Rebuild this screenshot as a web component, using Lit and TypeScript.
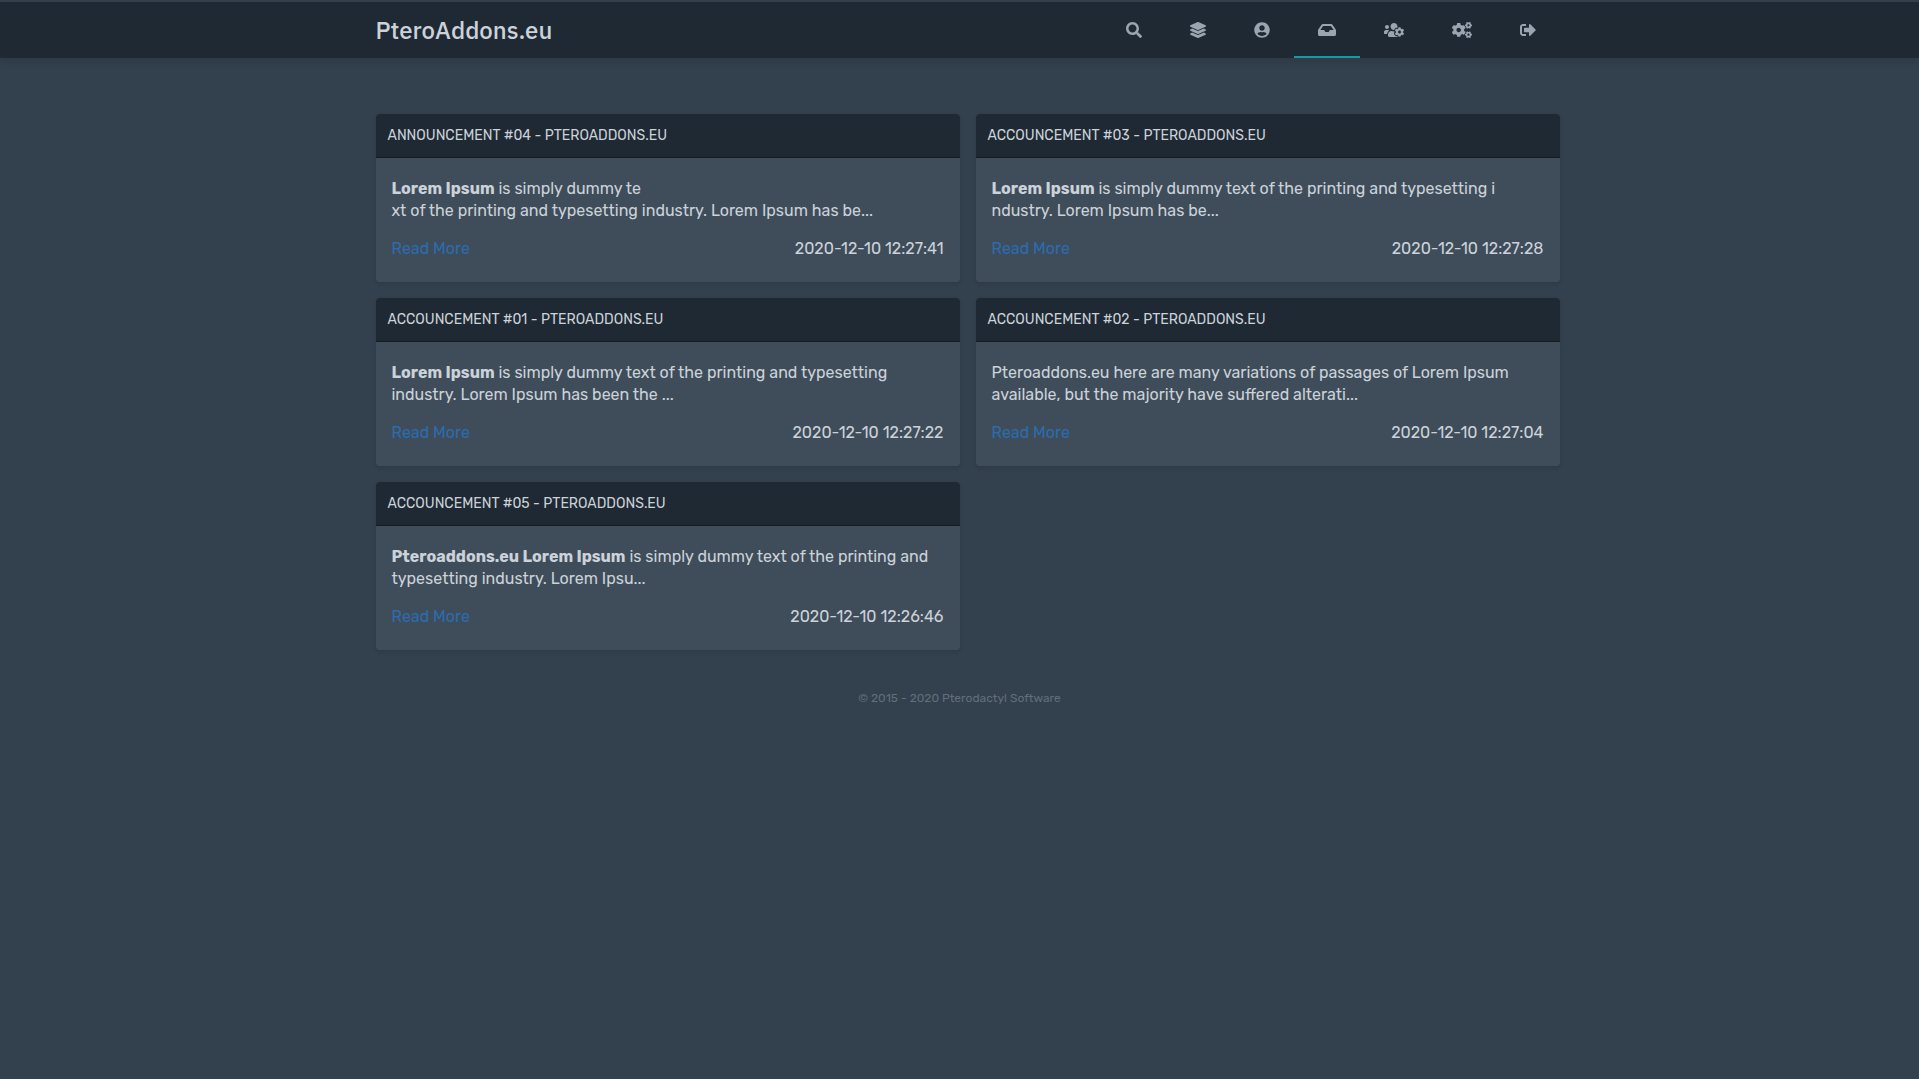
import { LitElement, html, css, svg } from "lit";
import { customElement, property } from "lit/decorators.js";

const smallCog =
  "M512.1 191l-8.2 14.3c-3 5.3-9.4 7.5-15.1 5.4-11.8-4.4-22.6-10.7-32.1-18.6-4.6-3.8-5.8-10.5-2.8-15.7l8.2-14.3c-6.9-8-12.3-17.3-15.9-27.4h-16.5c-6 0-11.2-4.3-12.2-10.3-2-12-2.1-24.6 0-37.1 1-6 6.2-10.4 12.2-10.4h16.5c3.6-10.1 9-19.4 15.9-27.4l-8.2-14.3c-3-5.2-1.9-11.9 2.8-15.7 9.5-7.9 20.4-14.2 32.1-18.6 5.7-2.1 12.1.1 15.1 5.4l8.2 14.3c10.5-1.9 21.2-1.9 31.7 0L552 6.3c3-5.3 9.4-7.5 15.1-5.4 11.8 4.4 22.6 10.7 32.1 18.6 4.6 3.8 5.8 10.5 2.8 15.7l-8.2 14.3c6.9 8 12.3 17.3 15.9 27.4h16.5c6 0 11.2 4.3 12.2 10.3 2 12 2.1 24.6 0 37.1-1 6-6.2 10.4-12.2 10.4h-16.5c-3.6 10.1-9 19.4-15.9 27.4l8.2 14.3c3 5.2 1.9 11.9-2.8 15.7-9.5 7.9-20.4 14.2-32.1 18.6-5.7 2.1-12.1-.1-15.1-5.4l-8.2-14.3c-10.4 1.9-21.2 1.9-31.7 0zm-10.5-58.8c38.5 29.6 82.4-14.3 52.8-52.8-38.5-29.7-82.4 14.3-52.8 52.8z";

interface NavItem {
  label: string;
  width: number;
  active?: boolean;
  shape: unknown;
}

const navItems: NavItem[] = [
  {
    label: "Search",
    width: 512,
    shape: svg`<path d="M505 442.7L405.3 343c-4.5-4.5-10.6-7-17-7H372c27.6-35.3 44-79.7 44-128C416 93.1 322.9 0 208 0S0 93.1 0 208s93.1 208 208 208c48.3 0 92.7-16.4 128-44v16.3c0 6.4 2.5 12.5 7 17l99.7 99.7c9.4 9.4 24.6 9.4 33.9 0l28.3-28.3c9.4-9.4 9.4-24.6.1-34zM208 336c-70.7 0-128-57.2-128-128 0-70.7 57.2-128 128-128 70.7 0 128 57.2 128 128 0 70.7-57.2 128-128 128z"/>`,
  },
  {
    label: "Servers",
    width: 512,
    shape: svg`<path d="M12.41 148.02l232.94 105.67c6.8 3.09 14.49 3.09 21.29 0l232.94-105.67c16.55-7.51 16.55-32.52 0-40.03L266.65 2.31a25.607 25.607 0 0 0-21.29 0L12.41 107.98c-16.55 7.51-16.55 32.53 0 40.04zm487.18 88.28l-58.09-26.33-161.64 73.27c-7.56 3.43-15.59 5.17-23.86 5.17s-16.29-1.74-23.86-5.17L70.51 209.97l-58.1 26.33c-16.55 7.5-16.55 32.5 0 40l232.94 105.59c6.8 3.08 14.49 3.08 21.29 0L499.59 276.3c16.55-7.5 16.55-32.5 0-40zm0 127.8l-57.87-26.23-161.86 73.37c-7.56 3.43-15.59 5.17-23.86 5.17s-16.29-1.74-23.86-5.17L70.29 337.87 12.41 364.1c-16.55 7.5-16.55 32.5 0 40l232.94 105.59c6.8 3.08 14.49 3.08 21.29 0L499.59 404.1c16.55-7.5 16.55-32.5 0-40z"/>`,
  },
  {
    label: "Account",
    width: 512,
    shape: svg`<path transform="translate(8 0)" d="M248 8C111 8 0 119 0 256s111 248 248 248 248-111 248-248S385 8 248 8zm0 96c48.6 0 88 39.4 88 88s-39.4 88-88 88-88-39.4-88-88 39.4-88 88-88zm0 344c-58.7 0-111.3-26.6-146.5-68.2 18.8-35.4 55.6-59.8 98.5-59.8 2.4 0 4.8.4 7.1 1.1 13 4.2 26.6 6.9 40.9 6.9 14.3 0 28-2.7 40.9-6.9 2.3-.7 4.7-1.1 7.1-1.1 42.9 0 79.7 24.4 98.5 59.8C359.3 421.4 306.7 448 248 448z"/>`,
  },
  {
    label: "Announcements",
    width: 576,
    active: true,
    shape: svg`<path d="M567.938 243.908L462.25 85.374A48.003 48.003 0 0 0 422.311 64H153.689a48 48 0 0 0-39.938 21.374L8.062 243.908A47.994 47.994 0 0 0 0 270.533V400c0 26.51 21.49 48 48 48h480c26.51 0 48-21.49 48-48V270.533a47.994 47.994 0 0 0-8.062-26.625zM162.252 128h251.497l85.333 128H376l-32 64H232l-32-64H76.918l85.334-128z"/>`,
  },
  {
    label: "Staff",
    width: 640,
    shape: svg`<path d="M610.5 341.3c2.6-14.1 2.6-28.5 0-42.6l25.8-14.9c3-1.7 4.3-5.2 3.3-8.5-6.7-21.6-18.2-41.2-33.2-57.4-2.3-2.5-6-3.1-9-1.4l-25.8 14.9c-10.9-9.3-23.4-16.5-36.9-21.3v-29.8c0-3.4-2.4-6.4-5.7-7.1-22.3-5-45-4.8-66.2 0-3.3.7-5.7 3.7-5.7 7.1v29.8c-13.5 4.8-26 12-36.9 21.3l-25.8-14.9c-2.9-1.7-6.7-1.1-9 1.4-15 16.2-26.5 35.8-33.2 57.4-1 3.3.4 6.8 3.3 8.5l25.8 14.9c-2.6 14.1-2.6 28.5 0 42.6l-25.8 14.9c-3 1.7-4.3 5.2-3.3 8.5 6.7 21.6 18.2 41.1 33.2 57.4 2.3 2.5 6 3.1 9 1.4l25.8-14.9c10.9 9.3 23.4 16.5 36.9 21.3v29.8c0 3.4 2.4 6.4 5.7 7.1 22.3 5 45 4.8 66.2 0 3.3-.7 5.7-3.7 5.7-7.1v-29.8c13.5-4.8 26-12 36.9-21.3l25.8 14.9c2.9 1.7 6.7 1.1 9-1.4 15-16.2 26.5-35.8 33.2-57.4 1-3.3-.4-6.8-3.3-8.5l-25.8-14.9zM496 368.5c-26.8 0-48.5-21.8-48.5-48.5s21.8-48.5 48.5-48.5 48.5 21.8 48.5 48.5-21.7 48.5-48.5 48.5zM96 224c35.3 0 64-28.7 64-64s-28.7-64-64-64-64 28.7-64 64 28.7 64 64 64zm224 32c1.9 0 3.7-.5 5.6-.6 8.3-21.7 20.5-42.1 36.3-59.2 7.4-8 17.9-12.6 28.9-12.6 6.9 0 13.7 1.8 19.6 5.3l7.9 4.6c.8-.5 1.6-.9 2.4-1.4 7-14.6 11.2-30.8 11.2-48 0-61.9-50.1-112-112-112S208 82.1 208 144c0 61.9 50.1 112 112 112zm105.2 194.5c-2.3-1.2-4.6-2.6-6.8-3.9-8.2 4.8-15.3 9.8-27.5 9.8-10.9 0-21.4-4.6-28.9-12.6-18.3-19.8-32.3-43.9-40.2-69.6-10.7-34.5 24.9-49.7 25.8-50.3-.1-2.6-.1-5.2 0-7.8l-7.9-4.6c-3.8-2.2-7-5-9.8-8.1-3.3.2-6.5.6-9.8.6-24.6 0-47.6-6-68.5-16h-8.3C179.6 288 128 339.6 128 403.2V432c0 26.5 21.5 48 48 48h255.4c-3.7-6-6.2-12.8-6.2-20.3v-9.2zM173.1 274.6C161.5 263.1 145.6 256 128 256H64c-35.3 0-64 28.7-64 64v32c0 17.7 14.3 32 32 32h65.9c6.3-47.4 34.9-87.3 75.2-109.4z"/>`,
  },
  {
    label: "Admin",
    width: 640,
    shape: svg`<path d=${smallCog}/><path transform="translate(0 301)" d=${smallCog}/><path d="M386.3 286.1l33.7 16.8c10.1 5.8 14.5 18.1 10.5 29.1-8.9 24.2-26.4 46.4-42.6 65.8-7.4 8.9-20.2 11.1-30.3 5.3l-29.1-16.8c-16 13.7-34.6 24.6-54.9 31.7v33.6c0 11.6-8.3 21.6-19.7 23.6-24.6 4.2-50.4 4.4-75.9 0-11.5-2-20-11.9-20-23.6V418c-20.3-7.2-38.9-18-54.9-31.7L74 403c-10 5.8-22.9 3.6-30.3-5.3-16.2-19.4-33.3-41.6-42.2-65.7-4-10.9.4-23.2 10.5-29.1l33.3-16.8c-3.9-20.9-3.9-42.4 0-63.4L12 205.8c-10.1-5.8-14.6-18.1-10.5-29 8.9-24.2 26-46.4 42.2-65.8 7.4-8.9 20.2-11.1 30.3-5.3l29.1 16.8c16-13.7 34.6-24.6 54.9-31.7V57.1c0-11.5 8.2-21.5 19.6-23.5 24.6-4.2 50.5-4.4 76-.1 11.5 2 20 11.9 20 23.6v33.6c20.3 7.2 38.9 18 54.9 31.7l29.1-16.8c10-5.8 22.9-3.6 30.3 5.3 16.2 19.4 33.2 41.6 42.1 65.8 4 10.9.1 23.2-10 29.1l-33.7 16.8c3.9 21 3.9 42.5 0 63.5zm-117.6 21.1c59.2-77-28.7-164.9-105.7-105.7-59.2 77 28.7 164.9 105.7 105.7z"/>`,
  },
  {
    label: "Sign out",
    width: 512,
    shape: svg`<path d="M497 273L329 441c-15 15-41 4.5-41-17v-96H152c-13.3 0-24-10.7-24-24v-96c0-13.3 10.7-24 24-24h136V88c0-21.4 25.9-32 41-17l168 168c9.3 9.4 9.3 24.6 0 34zM192 436v-40c0-6.6-5.4-12-12-12H96c-17.7 0-32-14.3-32-32V160c0-17.7 14.3-32 32-32h84c6.6 0 12-5.4 12-12V76c0-6.6-5.4-12-12-12H96c-53 0-96 43-96 96v192c0 53 43 96 96 96h84c6.6 0 12-5.4 12-12z"/>`,
  },
];

interface Announcement {
  title: string;
  lead: string;
  text: string;
  date: string;
}

const announcements: Announcement[] = [
  {
    title: "Announcement #04 - PteroAddons.eu",
    lead: "Lorem Ipsum",
    text: " is simply dummy te\nxt of the printing and typesetting industry. Lorem Ipsum has be...",
    date: "2020-12-10 12:27:41",
  },
  {
    title: "Accouncement #03 - PteroAddons.eu",
    lead: "Lorem Ipsum",
    text: " is simply dummy text of the printing and typesetting i\nndustry. Lorem Ipsum has be...",
    date: "2020-12-10 12:27:28",
  },
  {
    title: "Accouncement #01 - PteroAddons.eu",
    lead: "Lorem Ipsum",
    text: " is simply dummy text of the printing and typesetting industry. Lorem Ipsum has been the ...",
    date: "2020-12-10 12:27:22",
  },
  {
    title: "Accouncement #02 - PteroAddons.eu",
    lead: "",
    text: "Pteroaddons.eu here are many variations of passages of Lorem Ipsum available, but the majority have suffered alterati...",
    date: "2020-12-10 12:27:04",
  },
  {
    title: "Accouncement #05 - PteroAddons.eu",
    lead: "Pteroaddons.eu Lorem Ipsum",
    text: " is simply dummy text of the printing and typesetting industry. Lorem Ipsu...",
    date: "2020-12-10 12:26:46",
  },
];

@customElement("announcement-card")
export class AnnouncementCard extends LitElement {
  @property({ attribute: false }) item!: Announcement;

  static styles = css`
    :host {
      display: block;
      border-radius: 4px;
      background: #3f4d5a;
      box-shadow: 0 2px 4px rgba(0, 0, 0, 0.1);
      overflow: hidden;
    }
    .title {
      margin: 0;
      padding: 12px;
      border-bottom: 1px solid #131a20;
      background: #1f2933;
      font-size: 14px;
      line-height: 19px;
      font-weight: 400;
      text-transform: uppercase;
    }
    .body {
      display: flex;
      flex-direction: column;
      gap: 16px;
      padding: 20px 16px 22px;
      line-height: 22px;
    }
    .text {
      margin: 0;
      white-space: pre-line;
    }
    .meta {
      display: flex;
      justify-content: space-between;
    }
    .more {
      color: #2b6cb0;
      text-decoration: none;
    }
  `;

  render() {
    const { title, lead, text, date } = this.item;
    return html`
      <h2 class="title">${title}</h2>
      <div class="body">
        <p class="text">${lead ? html`<strong>${lead}</strong>` : ""}${text}</p>
        <div class="meta">
          <a class="more" href="#">Read More</a>
          <time>${date}</time>
        </div>
      </div>
    `;
  }
}

@customElement("app-root")
export class AppRoot extends LitElement {
  static styles = css`
    :host {
      display: block;
      box-sizing: border-box;
      min-height: 100vh;
      padding-top: 2px;
      background: #33404d;
      color: #cbd2d9;
      font-family: Rubik, Roboto, "Liberation Sans", sans-serif;
      font-size: 16px;
    }
    .bar {
      background: #1f2933;
      box-shadow: 0 4px 8px rgba(0, 0, 0, 0.1);
    }
    .inner {
      display: flex;
      align-items: center;
      justify-content: space-between;
      max-width: 1200px;
      height: 56px;
      margin: 0 auto;
    }
    .logo {
      padding-left: 16px;
      color: #cbd2d9;
      font-family: "IBM Plex Sans", Inter, sans-serif;
      font-size: 24px;
      font-weight: 500;
      text-decoration: none;
    }
    .nav {
      display: flex;
      height: 100%;
    }
    .link {
      display: flex;
      align-items: center;
      padding: 0 24px;
      color: #9aa5b1;
    }
    .link.active {
      box-shadow: inset 0 -2px #149ba5;
    }
    .icon {
      display: block;
      height: 16px;
      fill: currentColor;
    }
    .page {
      box-sizing: border-box;
      max-width: 1200px;
      margin: 56px auto 0;
    }
    .grid {
      display: grid;
      grid-template-columns: 1fr 1fr;
      gap: 16px;
      padding-left: 16px;
    }
    .footer {
      margin: 40px 0 0;
      color: #616e7c;
      font-size: 12px;
      line-height: 16px;
      text-align: center;
    }
  `;

  render() {
    return html`
      <header class="bar">
        <div class="inner">
          <a class="logo" href="#">PteroAddons.eu</a>
          <nav class="nav">
            ${navItems.map(
              (n) => html`<a class="link ${n.active ? "active" : ""}" href="#" aria-label=${n.label}>
                <svg class="icon" viewBox="0 0 ${n.width} 512" aria-hidden="true">${n.shape}</svg>
              </a>`
            )}
          </nav>
        </div>
      </header>
      <main class="page">
        <div class="grid">
          ${announcements.map((a) => html`<announcement-card .item=${a}></announcement-card>`)}
        </div>
        <p class="footer">© 2015 - 2020 Pterodactyl Software</p>
      </main>
    `;
  }
}
